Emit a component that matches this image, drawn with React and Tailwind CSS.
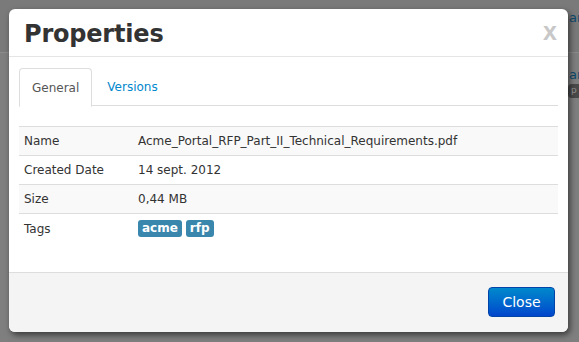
export default function App() {
  const font = { fontFamily: '"DejaVu Sans", Verdana, sans-serif' };
  const rows = [
    ["Name", "Acme_Portal_RFP_Part_II_Technical_Requirements.pdf", true],
    ["Created Date", "14 sept. 2012", false],
    ["Size", "0,44 MB", true],
  ];
  return (
    <div className="relative w-[579px] h-[342px] overflow-hidden bg-[#7f7f7f]" style={font}>
      {/* background page bits */}
      <div className="h-[53px] border-b border-[#8c8c8c] bg-[#7a7a7a]"></div>
      <div className="absolute left-[569px] top-[8px] text-[13px] text-[#0d4a6e]">ar</div>
      <div className="absolute left-[569px] top-[65px] text-[13px] text-[#0d4a6e]">ar</div>
      <div className="absolute left-[568px] top-[84px] w-[20px] h-[14px] rounded bg-[#4a4a4a] text-[9px] text-[#9a9a9a] pl-[3px]">p</div>

      {/* modal */}
      <div className="absolute left-[9px] top-[9px] w-[559px] h-[323px] rounded-[6px] bg-white shadow-[2px_3px_6px_rgba(0,0,0,0.55)] flex flex-col overflow-hidden">
        <div className="h-[48px] shrink-0 border-b border-[#e5e5e5] flex items-center justify-between pl-[15px] pr-[11px]">
          <div className="text-[24px] font-bold text-[#333] tracking-[-0.2px] mt-[2px]">Properties</div>
          <div className="text-[25px] font-bold text-[#c8c8c8] leading-none mb-[2px]" style={{ fontFamily: '"Liberation Sans", Arial, sans-serif' }}>x</div>
        </div>
        <div className="flex-1 px-[10px] pt-[11px]">
          <div className="flex border-b border-[#dddddd] h-[38px] text-[12px]">
            <div className="h-[39px] px-[12px] flex items-center border border-[#dddddd] border-b-white rounded-t-[4px] bg-white text-[#555]">General</div>
            <div className="px-[15px] flex items-center text-[#0088cc]">Versions</div>
          </div>
          <div className="mt-[20px] text-[12px] text-[#333] border-t border-[#dddddd]">
            {rows.map(([k, v, shade]) => (
              <div key={k} className={`flex h-[29px] items-center border-b border-[#dddddd] ${shade ? "bg-[#f9f9f9]" : "bg-white"}`}>
                <div className="w-[119px] pl-[5px]">{k}</div>
                <div>{v}</div>
              </div>
            ))}
            <div className="flex h-[29px] items-center">
              <div className="w-[119px] pl-[5px]">Tags</div>
              <div className="flex gap-[4px]">
                <span className="px-[4px] h-[17px] leading-[17px] rounded-[3px] bg-[#3a87ad] text-white text-[12px] font-bold">acme</span>
                <span className="px-[4px] h-[17px] leading-[17px] rounded-[3px] bg-[#3a87ad] text-white text-[12px] font-bold">rfp</span>
              </div>
            </div>
          </div>
        </div>
        <div className="h-[60px] shrink-0 border-t border-[#dddddd] bg-[#f4f4f4] flex items-start justify-end pt-[14px] pr-[13px]">
          <button className="w-[67px] h-[30px] rounded-[4px] border border-[#0044aa] bg-gradient-to-b from-[#0088cc] to-[#0044cc] text-white text-[14px]">Close</button>
        </div>
      </div>
    </div>
  );
}
